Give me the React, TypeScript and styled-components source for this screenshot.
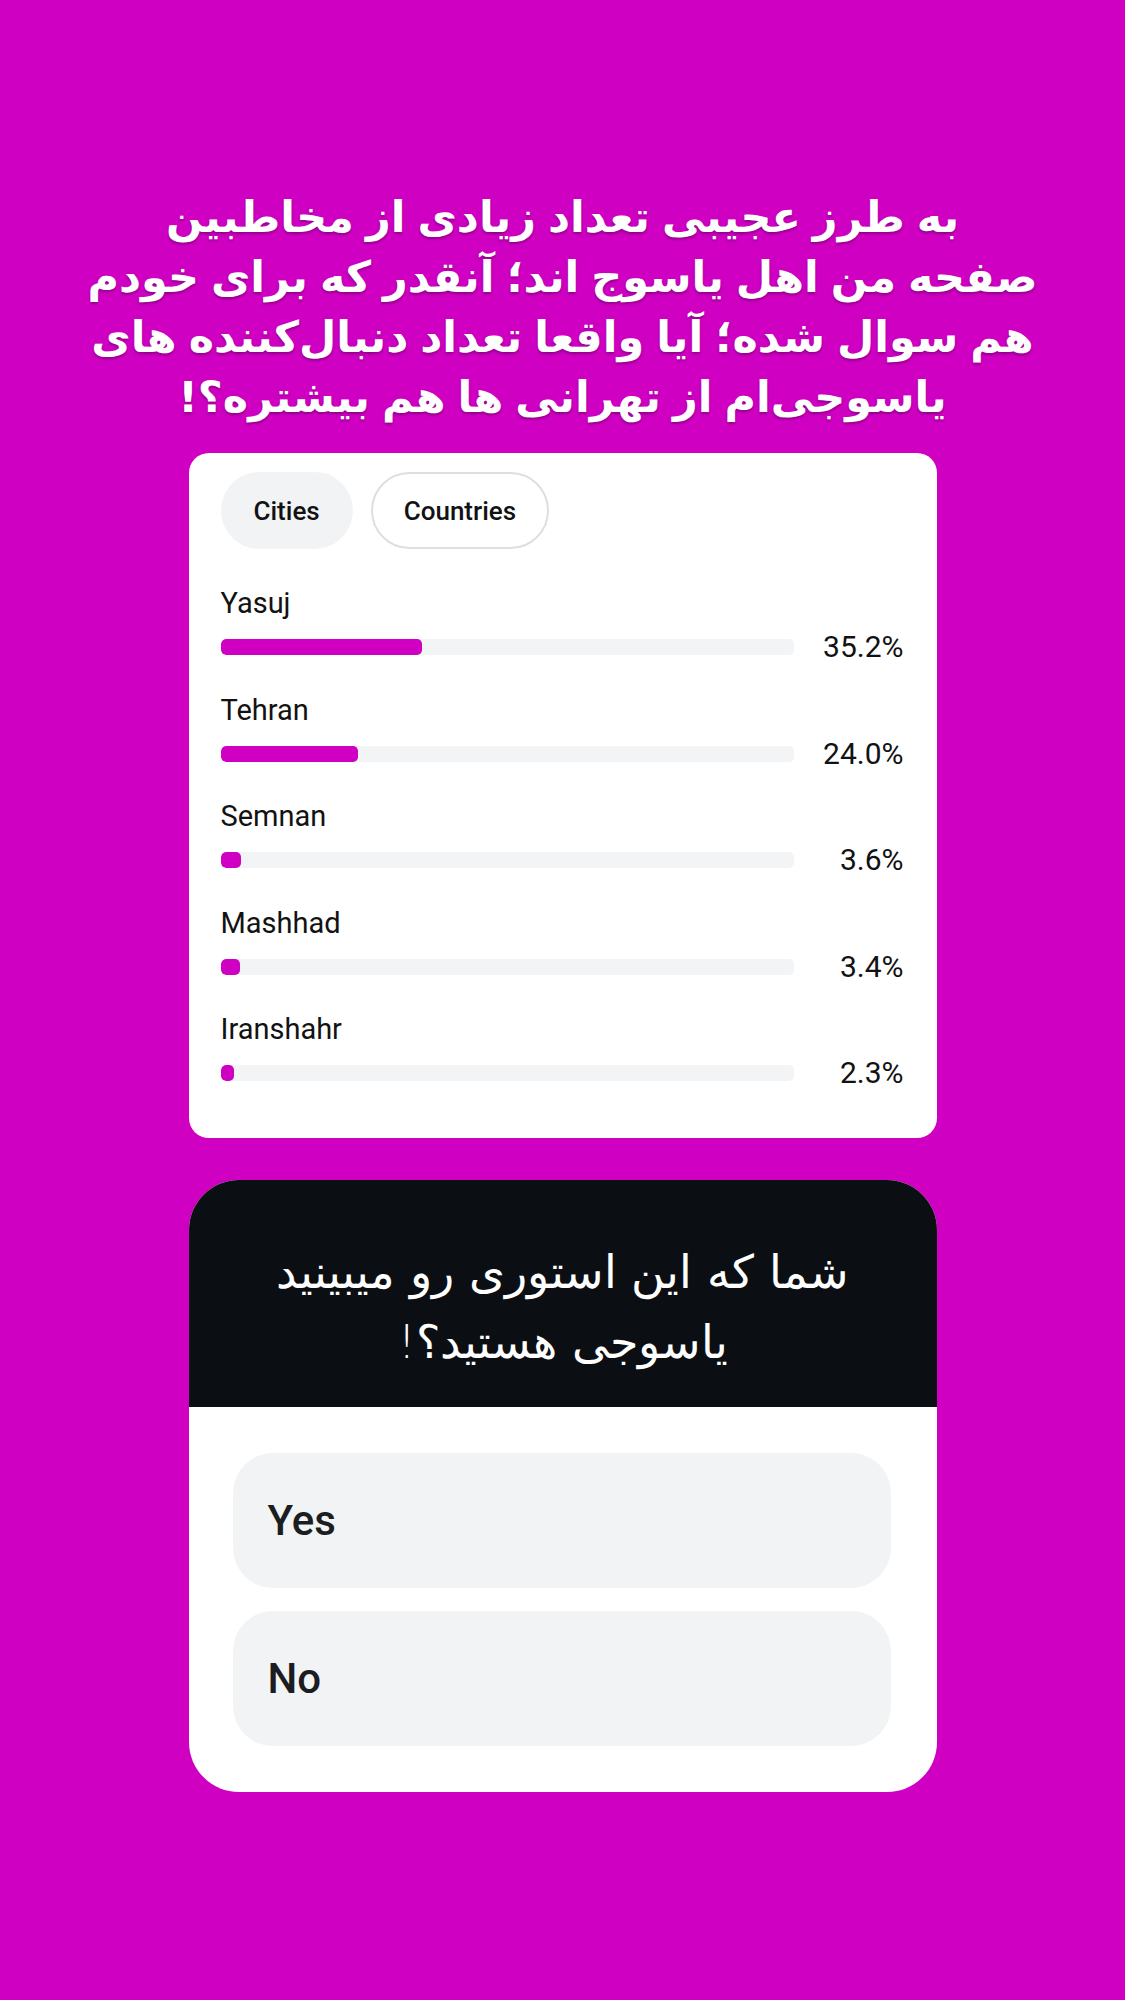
import React from "react";
import styled, { createGlobalStyle } from "styled-components";

const magenta = "#d000c3";

const GlobalStyle = createGlobalStyle`
  html, body {
    margin: 0;
    padding: 0;
    background: ${magenta};
  }
  * { box-sizing: border-box; }
`;

const Page = styled.main`
  width: 1125px;
  height: 2000px;
  background: ${magenta};
  display: flex;
  flex-direction: column;
  align-items: center;
  padding-top: 187px;
`;

const Headline = styled.h1`
  margin: 0;
  direction: rtl;
  text-align: center;
  font-family: "DejaVu Sans", sans-serif;
  font-weight: 700;
  font-size: 43px;
  line-height: 60px;
  word-spacing: -3px;
  color: #ffffff;
  text-shadow: 0 2px 3px rgba(70, 0, 70, 0.45);
`;

const HeadlineLine = styled.span`
  display: block;
  white-space: nowrap;
`;

const StatsCard = styled.section`
  margin-top: 26px;
  width: 748px;
  height: 685px;
  background: #ffffff;
  border-radius: 20px;
  padding: 19px 33px 0 32px;
`;

const Tabs = styled.div`
  display: flex;
  gap: 18px;
`;

const Tab = styled.button<{ $active?: boolean }>`
  height: 77px;
  padding: 0 31px;
  border-radius: 39px;
  border: 2px solid ${(p) => (p.$active ? "#f2f3f5" : "#dedede")};
  background: ${(p) => (p.$active ? "#f2f3f5" : "#ffffff")};
  font-family: Roboto, "Liberation Sans", sans-serif;
  font-weight: 500;
  font-size: 26px;
  color: #121212;
`;

const StatList = styled.div`
  margin-top: 38px;
  display: flex;
  flex-direction: column;
  gap: 32.5px;
`;

const Stat = styled.div`
  display: flex;
  flex-direction: column;
`;

const StatLabel = styled.div`
  font-family: Roboto, "Liberation Sans", sans-serif;
  font-size: 29px;
  line-height: 32px;
  color: #121212;
`;

const BarRow = styled.div`
  margin-top: 14px;
  height: 28px;
  display: grid;
  grid-template-columns: 573px 1fr;
  align-items: center;
`;

const Track = styled.div`
  height: 16px;
  border-radius: 5px;
  background: #f3f4f6;
  overflow: hidden;
`;

const Fill = styled.div`
  height: 100%;
  border-radius: 5px;
  background: ${magenta};
`;

const Percent = styled.div`
  text-align: right;
  font-family: Roboto, "Liberation Sans", sans-serif;
  font-size: 30px;
  line-height: 28px;
  color: #121212;
`;

const PollCard = styled.section`
  margin-top: 42px;
  width: 748px;
  height: 612px;
  background: #ffffff;
  border-radius: 50px;
  overflow: hidden;
  display: flex;
  flex-direction: column;
`;

const Question = styled.div`
  height: 227px;
  background: #0b0f13;
  padding: 57px 30px 0;
  direction: rtl;
  text-align: center;
  font-family: "DejaVu Sans", sans-serif;
  font-weight: 300;
  font-size: 46px;
  line-height: 70px;
  color: #ffffff;
`;

const QuestionLine = styled.span`
  display: block;
  white-space: nowrap;
`;

const Options = styled.div`
  padding: 46px 46px 0 44px;
  display: flex;
  flex-direction: column;
  gap: 23px;
`;

const Option = styled.div`
  height: 135px;
  border-radius: 40px;
  background: #f2f3f5;
  display: flex;
  align-items: center;
  padding-left: 35px;
  font-family: Roboto, "Liberation Sans", sans-serif;
  font-weight: 500;
  font-size: 42px;
  color: #1c1d20;
`;

const cities = [
  { name: "Yasuj", pct: 35.2 },
  { name: "Tehran", pct: 24.0 },
  { name: "Semnan", pct: 3.6 },
  { name: "Mashhad", pct: 3.4 },
  { name: "Iranshahr", pct: 2.3 },
];

export default function App() {
  return (
    <>
      <GlobalStyle />
      <Page>
        <Headline>
          <HeadlineLine>به طرز عجیبی تعداد زیادی از مخاطبین</HeadlineLine>
          <HeadlineLine>صفحه من اهل یاسوج اند؛ آنقدر که برای خودم</HeadlineLine>
          <HeadlineLine>هم سوال شده؛ آیا واقعا تعداد دنبال‌کننده های</HeadlineLine>
          <HeadlineLine>یاسوجی‌ام از تهرانی ها هم بیشتره؟!</HeadlineLine>
        </Headline>

        <StatsCard>
          <Tabs>
            <Tab $active>Cities</Tab>
            <Tab>Countries</Tab>
          </Tabs>
          <StatList>
            {cities.map((c) => (
              <Stat key={c.name}>
                <StatLabel>{c.name}</StatLabel>
                <BarRow>
                  <Track>
                    <Fill style={{ width: `${c.pct}%` }} />
                  </Track>
                  <Percent>{c.pct.toFixed(1)}%</Percent>
                </BarRow>
              </Stat>
            ))}
          </StatList>
        </StatsCard>

        <PollCard>
          <Question>
            <QuestionLine>شما که این استوری رو میبینید</QuestionLine>
            <QuestionLine>یاسوجی هستید؟!</QuestionLine>
          </Question>
          <Options>
            <Option>Yes</Option>
            <Option>No</Option>
          </Options>
        </PollCard>
      </Page>
    </>
  );
}
